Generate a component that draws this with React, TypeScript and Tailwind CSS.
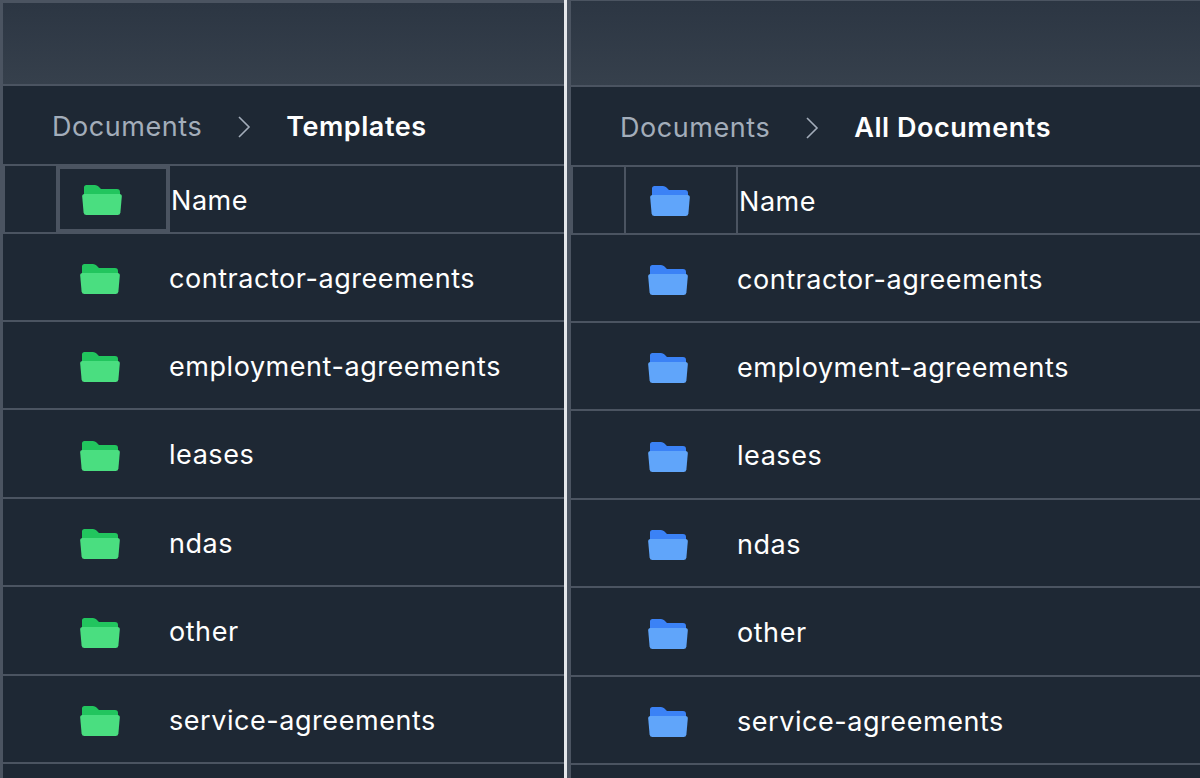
import React from 'react';

const names = ['contractor-agreements', 'employment-agreements', 'leases', 'ndas', 'other', 'service-agreements'];
const rowHeights = ['h-[88px]', 'h-[88px]', 'h-[89px]', 'h-[88px]', 'h-[89px]', 'h-[88px]'];

const Folder = ({ back, front }: { back: string; front: string }) => (
    <svg width="40" height="32" viewBox="0 0 40 32" className="block">
        <path d="M2 3.5 Q2 1 4.5 1 H13 Q15 1 16.5 2.5 L19 5 H35 Q38 5 38 8 V14 H2 Z" fill={back} />
        <path d="M2.5 10 H37.5 Q40 10 39.8 12.5 L38.4 28.5 Q38.1 31 35.5 31 H4.5 Q1.9 31 1.6 28.5 L0.2 12.5 Q0 10 2.5 10 Z" fill={front} />
    </svg>
);

type PaneProps = {
    current: string;
    back: string;
    front: string;
    focused?: boolean;
    className: string;
    topClass: string;
};

const Pane = ({ current, back, front, focused, className, topClass }: PaneProps) => (
    <div className={`flex flex-col overflow-hidden border-[#4b5461] ${className}`}>
        <div className={`shrink-0 bg-gradient-to-b from-[#2c3643] to-[#36404c] ${topClass}`} />
        <div className="flex h-[82px] shrink-0 items-center border-y-2 border-[#4b5461] pl-[49px] pt-[4px] text-[27px] tracking-[0.55px]">
            <span className="text-[#a3adba]">Documents</span>
            <svg width="14" height="24" viewBox="0 0 14 24" fill="none" stroke="#a3adba" strokeWidth="1.6" className="ml-[35px] mr-[35px]">
                <path d="M2 2 L12 12 L2 22" />
            </svg>
            <span className="font-semibold text-white">{current}</span>
        </div>
        {/* header row, the folder cell carries the focus box in the left pane */}
        <div className="flex h-[68px] shrink-0 items-stretch border-b-2 border-l-2 border-[#4b5461]">
            {focused ? (
                <>
                    <div className="w-[51px] shrink-0" />
                    <div className="flex w-[114px] shrink-0 items-center justify-center border-x-4 border-y-[3px] border-[#4b5461] pr-[22px] pt-[2px]">
                        <Folder back={back} front={front} />
                    </div>
                </>
            ) : (
                <>
                    <div className="ml-[-1px] w-[54px] shrink-0 border-r-2 border-[#4b5461]" />
                    <div className="flex w-[112px] shrink-0 items-center justify-center border-r-2 border-[#4b5461] pr-[22px] pt-[2px]">
                        <Folder back={back} front={front} />
                    </div>
                </>
            )}
            <div className="flex items-center pl-[1px] pt-[4px] text-[27px] tracking-[0.55px] text-white">Name</div>
        </div>
        {names.map((name, i) => (
            <div key={name} className={`flex shrink-0 items-center border-b-2 border-[#4b5461] pt-[2px] ${rowHeights[i]}`}>
                <div className="flex w-[166px] shrink-0 justify-center pl-[28px] pt-[2px]">
                    <Folder back={back} front={front} />
                </div>
                <div className="pt-[2px] text-[27px] tracking-[0.55px] text-white">{name}</div>
            </div>
        ))}
    </div>
);

const App: React.FC = () => {
    return (
        <div className="flex h-[778px] w-[1200px] overflow-hidden bg-[#1e2834] font-['Inter',sans-serif]">
            <Pane
                current="Templates"
                back="#22c55e"
                front="#4ade80"
                focused
                className="w-[564px] shrink-0 border-l-[3px] border-t-[3px]"
                topClass="h-[81px]"
            />
            <div className="w-[3px] shrink-0 bg-[#e5e7eb]" />
            <Pane
                current="All Documents"
                back="#3b82f6"
                front="#60a5fa"
                className="flex-1 border-l-4 border-t-[1px]"
                topClass="h-[84px]"
            />
        </div>
    );
};

export default App;
